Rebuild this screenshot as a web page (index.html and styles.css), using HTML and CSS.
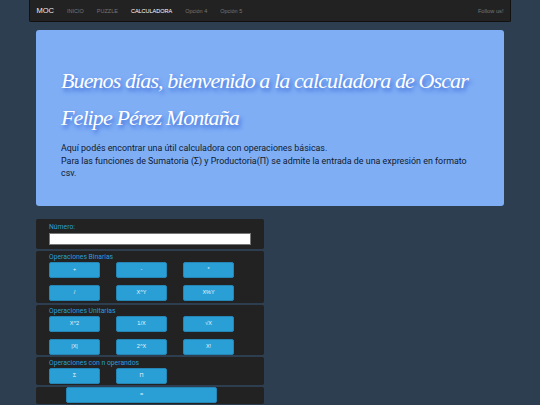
FILE: index.html
```html
<!DOCTYPE html>
<html lang="es">
<head>
<meta charset="utf-8">
<title>Calculadora</title>
<link rel="stylesheet" href="styles.css">
</head>
<body>
<nav class="navbar">
  <span class="brand">MOC</span>
  <a class="nav-link">INICIO</a>
  <a class="nav-link">PUZZLE</a>
  <a class="nav-link active">CALCULADORA</a>
  <a class="nav-link">Opción 4</a>
  <a class="nav-link">Opción 5</a>
  <a class="nav-link follow">Follow us!</a>
</nav>
<main class="content">
  <section class="hero">
    <h1>Buenos días, bienvenido a la calculadora de Oscar Felipe Pérez Montaña</h1>
    <p>Aquí podés encontrar una útil calculadora con operaciones básicas.<br>Para las funciones de Sumatoria (Σ) y Productoria(Π) se admite la entrada de una expresión en formato csv.</p>
  </section>
  <section class="calc">
    <div class="panel panel-number">
      <label class="label" for="num">Número:</label>
      <input class="field" id="num" type="text">
    </div>
    <div class="panel panel-ops panel-binary">
      <div class="label">Operaciones Binarias</div>
      <div class="btn-grid">
        <button class="btn">+</button><button class="btn">-</button><button class="btn">*</button>
        <button class="btn">/</button><button class="btn">X^Y</button><button class="btn">X%Y</button>
      </div>
    </div>
    <div class="panel panel-ops">
      <div class="label">Operaciones Unitarias</div>
      <div class="btn-grid">
        <button class="btn">X^2</button><button class="btn">1/X</button><button class="btn">√X</button>
        <button class="btn">|X|</button><button class="btn">2^X</button><button class="btn">X!</button>
      </div>
    </div>
    <div class="panel panel-ops panel-nary">
      <div class="label">Operaciones con n operandos</div>
      <div class="btn-grid">
        <button class="btn">Σ</button><button class="btn">Π</button>
      </div>
    </div>
    <div class="panel panel-equals">
      <button class="btn btn-wide">=</button>
    </div>
  </section>
</main>
</body>
</html>
```
FILE: styles.css
```css
* { box-sizing: border-box; }
html, body { height: 100%; overflow: hidden; }
body {
  margin: 0;
  background: #2c3e50;
  font-family: Roboto, "Liberation Sans", sans-serif;
}
.navbar {
  margin: 0 29px;
  height: 22px;
  display: flex;
  align-items: center;
  padding: 0 6.5px;
  background: #222;
  border: 1px solid #111;
  border-top: 0;
  border-radius: 0 0 2px 2px;
  font-family: "Liberation Sans", sans-serif;
}
.brand { color: #eee; font-size: 7.5px; margin-right: 13px; }
.nav-link { color: #777; font-size: 5.5px; margin-right: 13px; }
.nav-link.active { color: #fff; }
.nav-link.follow { margin: 0 0 0 auto; font-size: 5.7px; }
.content { padding: 8px 36px 0; }
.hero {
  height: 176px;
  padding: 32px 25px 0;
  background: #7faef5;
  border-radius: 3px;
}
.hero h1 {
  margin: 0;
  font: italic 400 22px/37px "Liberation Serif", serif;
  letter-spacing: -0.9px;
  color: #fff;
  text-shadow: 2px 3px 4px #3a68d8;
}
.hero p {
  margin: 6px 0 0;
  font-size: 8.9px;
  line-height: 12.6px;
  color: #0f1a2e;
}
.calc { width: 228px; margin-top: 13px; display: flex; flex-direction: column; gap: 2px; }
.panel { background: #222; border-radius: 2px; }
.panel-number { height: 30px; padding: 4px 13px 0; }
.panel-ops { padding: 2px 13px 0; }
.panel-binary { padding-bottom: 2px; }
.panel-nary { padding-bottom: 1px; }
.label {
  display: block;
  color: #2a9fd6;
  font-size: 6.8px;
  line-height: 8px;
}
.field {
  display: block;
  width: 202px;
  height: 12px;
  margin-top: 2px;
  padding: 0;
  background: #fff;
  border: 1px solid #777;
}
.btn-grid {
  display: grid;
  grid-template-columns: repeat(3, 51px);
  column-gap: 16px;
  row-gap: 7px;
  margin-top: 1px;
}
.btn {
  height: 16px;
  padding: 0;
  background: #2a9fd6;
  border: 1px solid #2585b5;
  border-radius: 2px;
  color: #e8f4fa;
  font: 400 5.5px/1 "Liberation Sans", sans-serif;
}
.panel-equals { height: 17px; padding-left: 30px; }
.btn-wide { display: block; width: 151px; }
```
